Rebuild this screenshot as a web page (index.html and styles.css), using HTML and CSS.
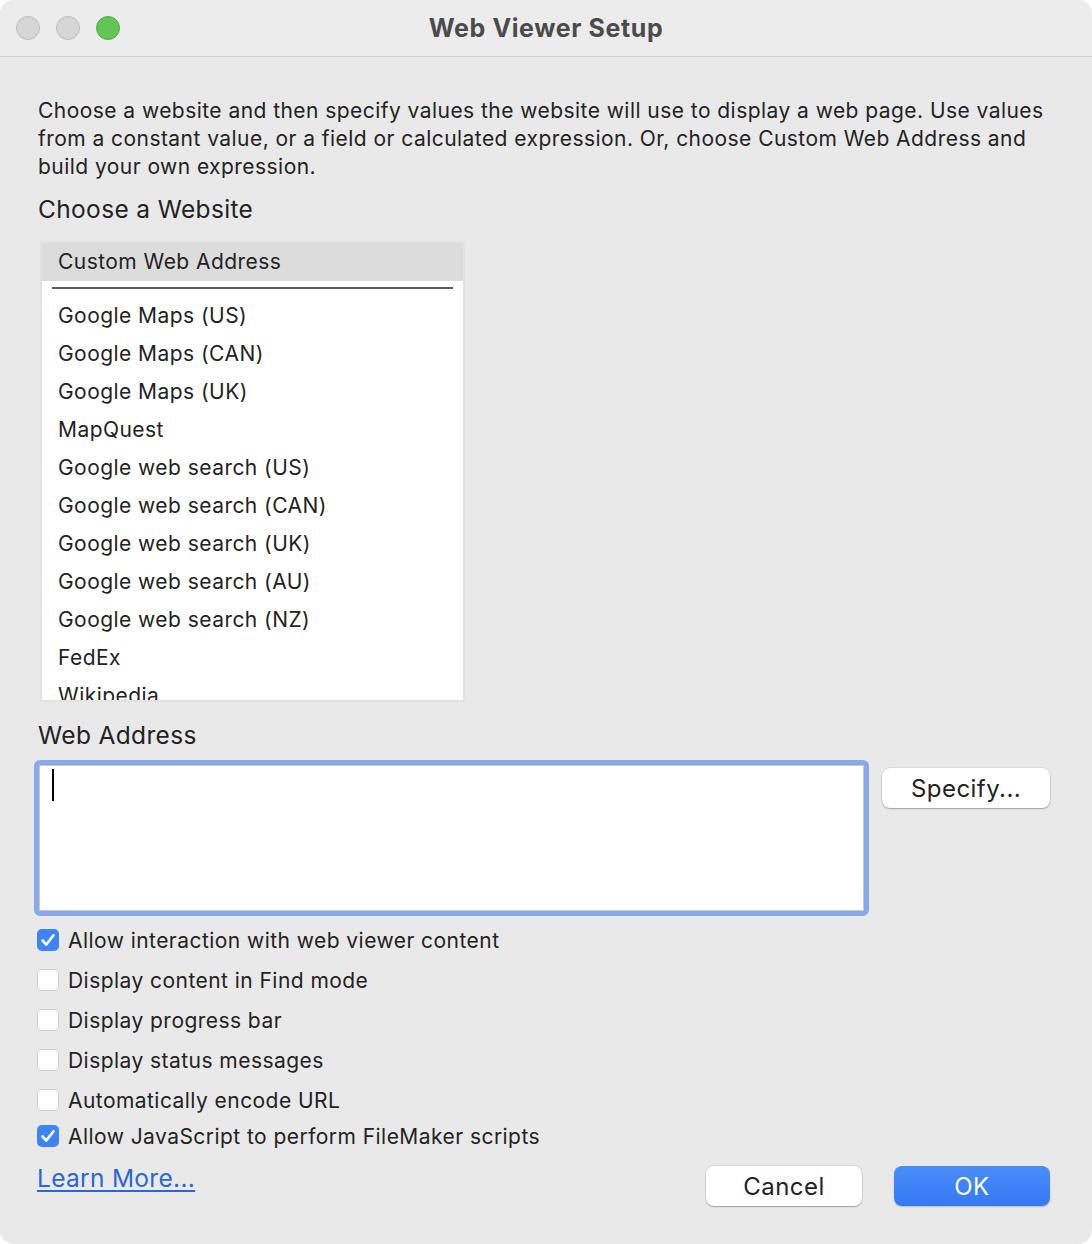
FILE: index.html
```html
<!DOCTYPE html>
<html>
<head>
<meta charset="utf-8">
<link rel="stylesheet" href="styles.css">
</head>
<body>
<div class="window">
  <div class="titlebar">
    <div class="lights">
      <span class="light gray"></span>
      <span class="light gray"></span>
      <span class="light green"></span>
    </div>
    <div class="title">Web Viewer Setup</div>
  </div>
  <div class="content">
    <p class="intro">Choose a website and then specify values the website will use to display a web page. Use values from a constant value, or a field or calculated expression. Or, choose Custom Web Address and build your own expression.</p>
    <h2 class="section">Choose a Website</h2>
    <div class="listbox">
      <div class="list-head">Custom Web Address</div>
      <div class="list-sep"></div>
      <ul class="list">
        <li>Google Maps (US)</li>
        <li>Google Maps (CAN)</li>
        <li>Google Maps (UK)</li>
        <li>MapQuest</li>
        <li>Google web search (US)</li>
        <li>Google web search (CAN)</li>
        <li>Google web search (UK)</li>
        <li>Google web search (AU)</li>
        <li>Google web search (NZ)</li>
        <li>FedEx</li>
        <li>Wikipedia</li>
      </ul>
    </div>
    <h2 class="section section-web">Web Address</h2>
    <div class="addr-row">
      <div class="focus-ring">
        <div class="textarea"><span class="caret"></span></div>
      </div>
      <button class="btn specify">Specify...</button>
    </div>
    <div class="checks">
      <label class="check"><span class="box on"><svg viewBox="0 0 22 22" width="22" height="22"><path d="M5.5 11.5 L9.3 15.5 L16.5 6.3" fill="none" stroke="#fff" stroke-width="2.6" stroke-linecap="round" stroke-linejoin="round"/></svg></span>Allow interaction with web viewer content</label>
      <label class="check"><span class="box"></span>Display content in Find mode</label>
      <label class="check"><span class="box"></span>Display progress bar</label>
      <label class="check"><span class="box"></span>Display status messages</label>
      <label class="check"><span class="box"></span>Automatically encode URL</label>
      <label class="check tight"><span class="box on"><svg viewBox="0 0 22 22" width="22" height="22"><path d="M5.5 11.5 L9.3 15.5 L16.5 6.3" fill="none" stroke="#fff" stroke-width="2.6" stroke-linecap="round" stroke-linejoin="round"/></svg></span>Allow JavaScript to perform FileMaker scripts</label>
    </div>
    <div class="footer">
      <a class="learn" href="#">Learn More...</a>
      <div class="actions">
        <button class="btn cancel">Cancel</button>
        <button class="btn ok">OK</button>
      </div>
    </div>
  </div>
</div>
</body>
</html>
```
FILE: styles.css
```css
* { box-sizing: border-box; }
html, body { margin: 0; padding: 0; background: #ffffff; }
body {
  width: 1092px;
  height: 1244px;
  font-family: Inter, "Noto Sans", "Liberation Sans", sans-serif;
  color: #232323;
}
.window {
  width: 1092px;
  height: 1244px;
  background: #e9e9e9;
  border-radius: 14px;
  overflow: hidden;
}
.titlebar {
  height: 57px;
  background: #ececec;
  border-bottom: 1px solid #cdcdcd;
  display: flex;
  align-items: center;
  position: relative;
}
.lights {
  display: flex;
  gap: 16px;
  padding-left: 16px;
}
.light {
  width: 24px;
  height: 24px;
  border-radius: 50%;
  display: block;
}
.light.gray { background: #d6d6d6; border: 1px solid #bdbdbd; }
.light.green { background: #62c655; border: 1px solid #50ad43; }
.title {
  position: absolute;
  left: 0; right: 0; top: 0; bottom: 0;
  display: flex;
  align-items: center;
  justify-content: center;
  font-weight: 700;
  font-size: 25px;
  letter-spacing: 0.6px;
  color: #4b4b4b;
  pointer-events: none;
}
.content {
  padding: 40px 42px 0 38px;
}
.intro {
  margin: 0;
  font-size: 21px;
  letter-spacing: 0.45px;
  line-height: 28px;
}
.section {
  margin: 13px 0 0 0;
  font-weight: 400;
  font-size: 24.5px;
  letter-spacing: 0.35px;
  line-height: 30px;
}
.listbox {
  margin: 17px 0 0 2px;
  width: 425px;
  height: 461px;
  background: #fff;
  border: 2px solid #e2e2e2;
  overflow: hidden;
}
.list-head {
  height: 38px;
  background: #dcdcdc;
  font-size: 21px;
  letter-spacing: 0.45px;
  line-height: 38px;
  padding-left: 16px;
}
.list-sep {
  margin: 6px 10px 0 10px;
  height: 2px;
  background: #5a5a5a;
}
.list {
  list-style: none;
  margin: 0;
  padding: 8px 0 0 16px;
}
.list li {
  font-size: 21px;
  letter-spacing: 0.45px;
  line-height: 38px;
  height: 38px;
}
.section-web { margin-top: 18px; }
.addr-row {
  display: flex;
  align-items: flex-start;
  margin: 10px 0 0 -4px;
}
.focus-ring {
  width: 836px;
  height: 156px;
  border: 5px solid #8aa8ee;
  border-radius: 6px;
}
.textarea {
  width: 100%;
  height: 100%;
  background: #fff;
  border: 1px solid #c9c9c9;
  padding: 3px 0 0 12px;
}
.caret {
  display: block;
  width: 2px;
  height: 32px;
  background: #000;
}
.btn {
  font-family: Inter, "Noto Sans", "Liberation Sans", sans-serif;
  font-size: 24px;
  letter-spacing: 0.45px;
  color: #232323;
  background: #fff;
  border: none;
  border-radius: 8px;
  box-shadow: 0 0 0 0.5px rgba(0,0,0,0.12), 0 1px 1.5px rgba(0,0,0,0.28);
  height: 40px;
  padding: 0;
}
.specify {
  width: 168px;
  margin: 8px 0 0 13px;
}
.checks {
  margin: 4px 0 0 -1px;
  display: flex;
  flex-direction: column;
}
.check {
  display: flex;
  align-items: center;
  height: 40px;
  font-size: 21px;
  letter-spacing: 0.45px;
  gap: 9px;
}
.check.tight { height: 32px; }
.box {
  width: 22px;
  height: 22px;
  border-radius: 5px;
  background: #fff;
  border: 1px solid #d0d0d0;
  display: block;
  flex-shrink: 0;
}
.box.on {
  background: #3d84f6;
  border: none;
}
.box svg { display: block; }
.footer {
  display: flex;
  justify-content: space-between;
  align-items: flex-start;
  margin: 11px 0 0 -1px;
}
.learn {
  font-size: 24.5px;
  letter-spacing: 0.3px;
  color: #2a66d6;
  text-decoration: underline;
  text-decoration-thickness: 1.5px;
  text-underline-offset: 3px;
  line-height: 30px;
}
.actions {
  display: flex;
  gap: 32px;
  margin-top: 3px;
}
.cancel { width: 156px; }
.ok {
  width: 156px;
  color: #fff;
  background: linear-gradient(#4a8df8, #3478f5);
  box-shadow: 0 1px 1.5px rgba(0,0,0,0.2);
}
```
